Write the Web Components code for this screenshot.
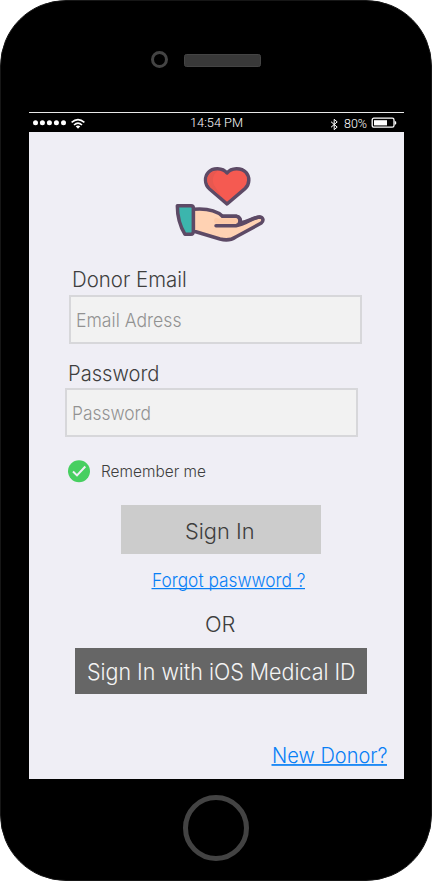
<!DOCTYPE html>
<html lang="en">
<head>
<meta charset="utf-8">
<title>Donor Sign In</title>
<style>
body{margin:0;background:#fff;font-family:Inter,"Liberation Sans",sans-serif;font-weight:280;color:#3e3e3e}
</style>
</head>
<body>
<phone-frame>
  <status-bar slot="status"></status-bar>
  <sign-in-form></sign-in-form>
</phone-frame>
<script>
const define = (name, html, setup) => customElements.define(name, class extends HTMLElement {
  connectedCallback() {
    if (this.shadowRoot) return;
    const t = document.createElement('template');
    t.innerHTML = html;
    this.attachShadow({mode: 'open'}).append(t.content.cloneNode(true));
    if (setup) setup.call(this, this.shadowRoot);
  }
});

/* A single line of type set to an exact measure. */
define('type-line', `
<style>
:host{display:block;flex:none}
svg{display:block;overflow:visible}
text{fill:currentColor;white-space:pre}
</style>
<svg height="20"><text x="0" y="16" lengthAdjust="spacingAndGlyphs"></text></svg>`, function (root) {
  const w = +this.getAttribute('measure'), size = this.getAttribute('size');
  const svg = root.querySelector('svg'), text = root.querySelector('text');
  svg.setAttribute('width', w);
  text.textContent = this.getAttribute('text');
  text.setAttribute('font-size', size);
  text.setAttribute('textLength', w);
  const rule = +this.getAttribute('rule');
  if (rule) svg.insertAdjacentHTML('beforeend',
    `<rect x="-0.5" y="${this.getAttribute('rule-y') || 17}" width="${w}" height="${rule}" fill="currentColor"/>`);
});

define('phone-frame', `
<style>
:host{display:flex;flex-direction:column;box-sizing:border-box;width:432px;height:881px;background:#000;border:1px solid #161616;border-radius:66px;padding:0 27px 0 28px}
header{height:110.5px;box-sizing:border-box;padding:49.5px 0 0 122px;display:flex;gap:16px}
.camera{width:17px;height:17px;box-sizing:border-box;border:3px solid #444;border-radius:50%}
.speaker{box-sizing:border-box;width:77px;height:13px;margin-top:3.5px;background:#383838;border:1px solid #444;border-radius:2.5px}
main{width:375px;height:647px;background:#efeef5}
footer{display:flex;justify-content:center;padding-top:16px;width:375px}
.home{box-sizing:border-box;width:66px;height:66px;border:5px solid #434343;border-radius:50%;margin-right:1px}
</style>
<header><div class="camera"></div><div class="speaker"></div></header>
<slot name="status"></slot>
<main><slot></slot></main>
<footer><div class="home"></div></footer>`);

define('status-bar', `
<style>
:host{display:flex;box-sizing:border-box;width:375px;height:20.5px;border-top:1.5px solid #e8e8e8;background:#000;color:#fff;font-family:Roboto,sans-serif;font-weight:330}
svg{display:block;flex:none}
.time{margin:-2px 0 0 103px}
.pct{margin:-1px 0 0 3.7px}
.bt{margin:5px 0 0 86px}
.bat{margin:4px 0 0 4.3px}
</style>
<svg width="58" height="18" viewBox="0 0 58 18" fill="#fff">
<circle cx="6.5" cy="9.8" r="2.5"/><circle cx="13.4" cy="9.8" r="2.5"/><circle cx="20.4" cy="9.8" r="2.5"/><circle cx="27.4" cy="9.8" r="2.5"/><circle cx="34.5" cy="9.8" r="2.5"/>
<g fill="none" stroke="#fff" stroke-width="1.6"><path d="M42.6 9.4Q49 3.9 55.4 9.4"/><path d="M45 12Q49 8.4 53 12"/></g><path d="M46.7 13.3Q49 11.6 51.3 13.3L49 15.7Z"/>
</svg>
<type-line class="time" text="14:54 PM" size="12.3" measure="53"></type-line>
<svg class="bt" width="11" height="13" viewBox="0 0 11 13" fill="none" stroke="#fff" stroke-width="1"><path d="M2 3.7L8.2 9.1L5.2 11.7V1.3L8.2 3.9L2 9.3"/></svg>
<type-line class="pct" text="80%" size="12" measure="23"></type-line>
<svg class="bat" width="26" height="12" viewBox="0 0 26 12"><rect x="1.2" y="1.2" width="21.8" height="9" rx="1.7" fill="none" stroke="#fff" stroke-width="1.3"/><path d="M3 3.2H16V8.4H3Z" fill="#fff"/><path d="M23.7 3.7L25.2 4.7V6.9L23.7 7.9Z" fill="#fff"/></svg>`);

define('donation-logo', `
<style>:host{display:block;width:110px;height:95px}svg{display:block}</style>
<svg width="110" height="95" viewBox="0 0 330 285" stroke="#5d4a66" stroke-width="10.5" stroke-linejoin="round" stroke-linecap="round">
<path fill="#f55a51" d="M186 147L132 100C119 87 118 65 130 52C143 37 173 37 186 54C199 37 229 37 243 52C255 65 254 87 241 100Z"/>
<path fill="#e85850" stroke="none" d="M170 126L137 98C122 83 124 65 136 55C143 49 150 47 158 48C141 60 140 83 151 96Z"/>
<path fill="#ffd2b3" d="M85 163C119 160 151 164 173 184H214C225 185 228 193 225 204C248 201 264 187 284 186C295 187 297 197 289 204L212 246C199 255 180 256 165 252L85 228Z"/>
<path fill="#fdc9a6" stroke="none" d="M153 188C162 191 168 191 176 190H213C221 191 222 205 213 206H154C145 202 145 192 153 188Z"/>
<path fill="none" d="M173 184H214C227 185 230 209 213 212H153M213 212C243 207 264 187 284 186"/>
<path fill="#3cb5ad" d="M37 152H78C83 152 85 155 85 159V229C85 234 83 238 78 238H60C44 212 37 182 37 152Z"/>
</svg>`);

define('text-field', `
<style>
:host{display:block;box-sizing:border-box;width:293px;height:49px;border:2px solid #d7d7da;background:#f2f2f2;color:#929292;padding:14px 0 0 5px}
</style><slot></slot>`);

define('action-button', `
<style>
:host{display:flex;justify-content:center;box-sizing:border-box;background:#ccc}
:host([kind=dark]){background:#666;color:#f4f4f4}
</style><slot></slot>`);

define('sign-in-form', `
<style>
:host{display:flow-root}
donation-logo{margin:23px 0 0 136px}
.l1{margin:21px 0 0 42.8px}
.f1{margin:4px 0 0 40px}
.l2{margin:21px 0 0 38.8px}
.f2{margin:3px 0 0 36px}
.remember{display:flex;align-items:flex-start;gap:10.5px;margin:23px 0 0 39px;height:24px}
.remember svg{display:block}
.remember type-line{margin-top:1px}
.signin{margin:21px 0 0 92px;width:200px;height:49px;padding-top:18px;padding-right:3px}
.forgot{margin:17px 0 0 122.5px;color:#087ff5}
.or{margin:24.5px 0 0 175.5px}
.medical{margin:12px 0 0 46px;width:292px;height:46px;padding-top:16.3px;padding-left:1px}
.new{margin:53px 0 0 242.5px;color:#087ff5}
</style>
<donation-logo></donation-logo>
<type-line class="l1" text="Donor Email" size="21" measure="114.8"></type-line>
<text-field class="f1"><type-line text="Email Adress" size="18.7" measure="105.5"></type-line></text-field>
<type-line class="l2" text="Password" size="21" measure="91.5"></type-line>
<text-field class="f2"><type-line text="Password" size="18.7" measure="79"></type-line></text-field>
<div class="remember">
<svg width="22" height="23" viewBox="0 0 22 23"><circle cx="11" cy="11.2" r="11" fill="#47cf60"/><path d="M5 11.5L9 15.4L17.3 6.5" fill="none" stroke="#efeef5" stroke-width="2"/></svg>
<type-line text="Remember me" size="16" measure="105"></type-line></div>
<action-button class="signin"><type-line text="Sign In" size="22" measure="69.5"></type-line></action-button>
<type-line class="forgot" text="Forgot paswword ?" size="18.7" measure="153.5" rule="1.2" rule-y="17"></type-line>
<type-line class="or" text="OR" size="21" measure="30.5"></type-line>
<action-button kind="dark" class="medical"><type-line text="Sign In with iOS Medical ID" size="22.3" measure="268.5"></type-line></action-button>
<type-line class="new" text="New Donor?" size="21" measure="115.5" rule="1.7" rule-y="17.1"></type-line>`);
</script>
</body>
</html>
